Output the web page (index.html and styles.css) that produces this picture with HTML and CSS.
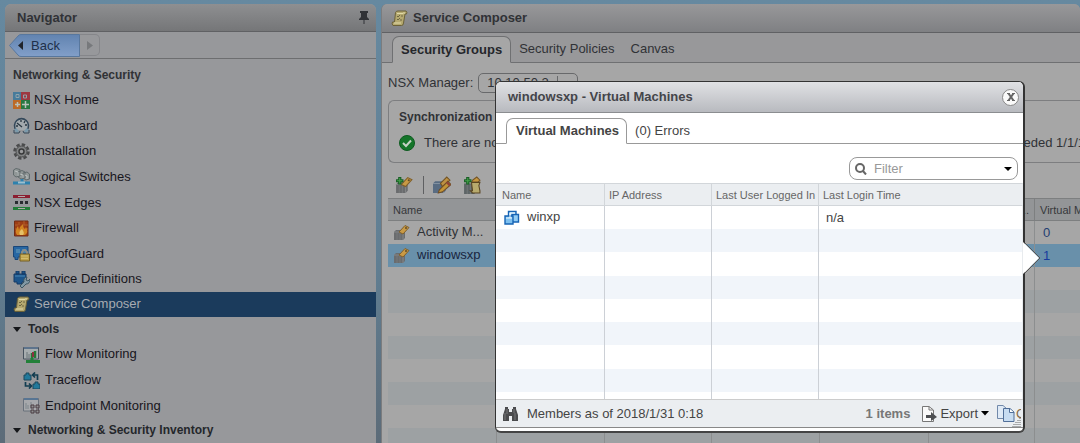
FILE: index.html
```html
<!DOCTYPE html>
<html lang="en">
<head>
<meta charset="utf-8">
<title>Service Composer</title>
<link rel="stylesheet" href="styles.css">
</head>
<body>
<svg class="defs" aria-hidden="true">
  <symbol id="scroll" viewBox="0 0 17 17">
    <path d="M4.500 2.500Q5 1 7 1H15Q16.500 2 15.500 4H14L12.500 13Q12.500 15.500 10.500 15.500H2Q.5 14 1.500 12H3.500Z" fill="#b5a970" stroke="#6b6138"/>
    <path d="M6 3.500H12M3 13H10M13 2V4" stroke="#e0d9a8" fill="none"/>
    <path d="M6 6l1 1 2-2M10 6h2M6 9l1 1 2-2M9 10h2" stroke="#6f6742" fill="none"/>
  </symbol>
  <symbol id="group" viewBox="0 0 17 17">
    <path d="M1 8L3 6H12V14L10 16H1Z" fill="#6a6c6e"/>
    <path d="M1 8H10V16M10 8L12 6" stroke="#858789" fill="none"/>
    <path d="M4 9V16M7 9V16" stroke="#77797b" fill="none"/>
    <path d="M6 8L12 1.500L16 3.500L10 10Z" fill="#c99a45" stroke="#80602c"/>
    <circle cx="13" cy="4" r="1" fill="#614b26"/>
  </symbol>
  <symbol id="plus" viewBox="0 0 17 17"><path d="M4.500 1V8M1 4.500H8" stroke="#175f24" stroke-width="3"/><path d="M4.500 2V7M2 4.500H7" stroke="#46a24b"/></symbol>
</svg>
<div class="app">
  <nav class="panel navigator" aria-label="Navigator">
    <header class="panel-head">
      <h2>Navigator</h2>
      <svg class="pin" width="12" height="15" viewBox="0 0 12 15"><path d="M2 1H10V3H9V7L11 9V10H1V9L3 7V3H2ZM5.500 10H6.500V14H5.500Z" fill="#303236"/></svg>
    </header>
    <div class="history">
      <button class="back"><svg width="71" height="23" viewBox="0 0 71 23"><defs><linearGradient id="bg" x2="0" y2="1"><stop stop-color="#6183b0"/><stop offset="1" stop-color="#829fc9"/></linearGradient></defs><path d="M.5 11.500L9 2Q10 .5 12 .5H70.500V22.500H12Q10 22.500 9 21Z" fill="url(#bg)" stroke="#58779d"/><path d="M14 7V16L9 11.500Z" fill="#20242c"/></svg><span>Back</span></button>
      <button class="forward" aria-label="Forward"><svg width="6" height="9" viewBox="0 0 6 9"><path d="M0 0L6 4.500L0 9Z" fill="#77797c"/></svg></button>
    </div>
    <h3>Networking &amp; Security</h3>
    <ul class="nav-list">
      <li><a href="#"><svg viewBox="0 0 17 17"><rect width="8" height="8" fill="#477b9b"/><rect x="8" width="9" height="8" fill="#9e3741"/><rect y="8" width="8" height="9" fill="#bd6a27"/><rect x="8" y="8" width="9" height="9" fill="#277841"/><path d="M3 2.500H6V5.500H3ZM10.500 3h3v3h-3Z" fill="none" stroke="#8fa3ab"/><path d="M2 12.500H7M4.500 10v5M9 12.500h7M12.500 9v7" fill="none" stroke="#b9c1bb" stroke-width="1.500"/></svg>NSX Home</a></li>
      <li><a href="#"><svg viewBox="0 0 17 17"><path d="M3 13A7 7 0 1 1 14 13" fill="#a3a9ad" stroke="#34485a" stroke-width="1.600"/><path d="M4 6L9 10M8 3V5M12 4l-1 2M14 8h-2M3 9h2" stroke="#2a3742" fill="none" stroke-width="1.300"/><path d="M2 12L5 15M15 12L12 15" stroke="#7a9aac" stroke-width="3"/><path d="M1 13v3h5l1-2M16 13v3h-5l-1-2" stroke="#34485a" fill="none"/></svg>Dashboard</a></li>
      <li><a href="#"><svg viewBox="0 0 17 17"><circle cx="8.500" cy="8.500" r="7" fill="none" stroke="#4a4b4c" stroke-width="2.500" stroke-dasharray="3.400 2.100"/><circle cx="8.500" cy="8.500" r="5.500" fill="#808283" stroke="#4a4b4c"/><circle cx="8.500" cy="8.500" r="2.500" fill="#9b9c9e" stroke="#393a3b" stroke-width="1.500"/></svg>Installation</a></li>
      <li><a href="#"><svg viewBox="0 0 17 17"><path d="M.5 2L3 .5L7 1.500V8L3 9L.5 7ZM5 4L9 2.500L12 4V10L8 11L5 9ZM10 5L14 4L16.500 6V11L13 12L10 10Z" fill="#919797" stroke="#626b6d"/><path d="M2 3l3 1v4M7 6l3 1v3M12 7l2 1v3" fill="none" stroke="#bac0c0"/><path d="M9 11V15M0 15H17" stroke="#2d81ae" stroke-width="3"/><path d="M5 14.500h7" stroke="#9bc0cf" stroke-width="2"/></svg>Logical Switches</a></li>
      <li><a href="#"><svg viewBox="0 0 17 17"><path d="M0 2.500H17" stroke="#8b1e31" stroke-width="3"/><path d="M0 14.500H17" stroke="#227c38" stroke-width="3"/><path d="M5 2.500h7M5 14.500h7" stroke="#b2a9a9"/><path d="M2 8.500h3M7 8.500h3M12 8.500h3" stroke="#292c30" stroke-width="3"/></svg>NSX Edges</a></li>
      <li><a href="#"><svg viewBox="0 0 17 17"><path d="M1.500 1H15V16H1.500Z" fill="#9e3d15" stroke="#702d16"/><path d="M2 5H5M6 2V5M10 5H15M11 1V5M2 9H4M13 9H15" stroke="#b0602c"/><path d="M4 15Q1 11 5 6L6 10Q7 6 10 4Q10 8 12 9L13 7Q16 12 12 15Z" fill="#d18422"/><path d="M7 15Q5 12 9 9Q12 13 10 15Z" fill="#e6c169"/></svg>Firewall</a></li>
      <li><a href="#"><svg viewBox="0 0 17 17"><path d="M.5 1.500H15V12H5V14.500H2V12H.5Z" fill="#2867a3" stroke="#1a4779"/><path d="M3 4h4v4H3ZM9 4h4v4H9Z" fill="#4b84ae"/><path d="M9 9V7Q11.500 3 14 7V9" fill="none" stroke="#8b8e89" stroke-width="2"/><path d="M7 9H16.500V16H7Z" fill="#bfa34d" stroke="#745f25"/><path d="M8 11h7M8 13.500h7" stroke="#d3bc6d"/></svg>SpoofGuard</a></li>
      <li><a href="#"><svg viewBox="0 0 17 17"><path d="M3 0H6V3H3ZM9 0H12V3H9ZM1 3H13V11H9V13H4V11H1Z" fill="#1d558b" stroke="#163b65"/><path d="M2 5H12" stroke="#4989b7"/><path d="M7 15L11 11Q10 7 14 6L13 9L15 10L17 8Q17 13 13 13L9 17Z" fill="#8198a5" stroke="#3d5663"/></svg>Service Definitions</a></li>
      <li><a href="#" class="current" aria-current="page"><svg><use href="#scroll"/></svg>Service Composer</a></li>
    </ul>
    <h3 class="branch"><svg width="8" height="5" viewBox="0 0 8 5"><path d="M0 0H8L4 5Z" fill="#15171a"/></svg>Tools</h3>
    <ul class="nav-list tools">
      <li><a href="#"><svg viewBox="0 0 17 17"><path d="M.5 1.500H15.500V13H.5Z" fill="#a7adaf" stroke="#46515c"/><path d="M1 2H15" stroke="#5d738c" stroke-width="2"/><path d="M4 6V12M6 8V12" stroke="#6b7478"/><path d="M9 12V7M12 12V5" stroke="#267937" stroke-width="2.500"/><path d="M10 6V11" stroke="#8d3141" stroke-width="2"/><path d="M9 12V15M3 15.500H17" stroke="#228039" stroke-width="3"/></svg>Flow Monitoring</a></li>
      <li><a href="#"><svg viewBox="0 0 17 17"><path d="M1 3H3V1H6V3H8V8H1ZM10 12H12V10H15V12H17V17H10Z" fill="#22799b" stroke="#1d485d"/><path d="M14.500 8V3H10M12 .5L9.500 3L12 5.500M2.500 10V14H8M6 11.500L8.500 14L6 16.500" fill="none" stroke="#123c50" stroke-width="1.700"/></svg>Traceflow</a></li>
      <li><a href="#"><svg viewBox="0 0 17 17"><path d="M.5 1.500H15.500V14H.5Z" fill="#a7a9ac" stroke="#69717b"/><path d="M1 2H15" stroke="#587593" stroke-width="2"/><path d="M3 6V12M5 8V12M8 5V12" stroke="#7c858a"/><path d="M8 8h3v3H8ZM13 8h3v3h-3ZM8 13h3v3H8ZM13 13h3v3h-3Z" fill="#8f9091" stroke="#4b3d42"/></svg>Endpoint Monitoring</a></li>
    </ul>
    <h3 class="branch"><svg width="8" height="5" viewBox="0 0 8 5"><path d="M0 0H8L4 5Z" fill="#15171a"/></svg>Networking &amp; Security Inventory</h3>
  </nav>

  <main class="panel composer">
    <header class="panel-head">
      <svg class="icon"><use href="#scroll"/></svg>
      <h1>Service Composer</h1>
    </header>
    <div class="tabs">
      <button class="tab active">Security Groups</button>
      <button class="tab">Security Policies</button>
      <button class="tab">Canvas</button>
    </div>
    <div class="content">
      <div class="manager">
        <label for="manager">NSX Manager:</label>
        <span class="picker"><select id="manager"><option>10.10.50.2</option></select></span>
      </div>
      <section class="sync">
        <h4>Synchronization Status</h4>
        <p><svg class="ok" viewBox="0 0 16 16"><circle cx="8" cy="8" r="7.500" fill="#15752a" stroke="#0e5b20"/><path d="M4 8L7 11L12 5.500" fill="none" stroke="#c5d1c5" stroke-width="2"/></svg>There are no errors.<span>Last synchronization succeeded 1/1/1</span></p>
      </section>
      <div class="toolbar">
        <button aria-label="New group"><svg><use href="#group"/><use href="#plus"/></svg></button>
        <button class="edit" aria-label="Edit group"><svg viewBox="0 0 17 17"><path d="M0 7L2 5H12V14L10 16H0Z" fill="#596c82"/><path d="M0 7H10V16" stroke="#8391a0" fill="none"/><path d="M7 7L13 1L16 4L9 10Z" fill="#be9243" stroke="#745424"/><path d="M6 13L14 5L17 8L9 15L5 16Z" fill="#c29437" stroke="#6f4d25"/><path d="M13 6L16 9" stroke="#914238" stroke-width="2"/></svg></button>
        <button class="add" aria-label="Add policy"><svg viewBox="0 0 17 17"><path d="M1 7H11V17H1Z" fill="#5e6567"/><path d="M4 8V17M7 8V17" stroke="#737878"/><path d="M9 4L13 1L16 4L14 6H8Z" fill="#c69640" stroke="#765626"/><path d="M8 6H16L15 9L16 14V16H9L7 14H9Z" fill="#b8aa6d" stroke="#594522"/><path d="M4.500 1V8M1 4.500H8" stroke="#175f24" stroke-width="3"/><path d="M4.500 2V7M2 4.500H7" stroke="#46a24b"/></svg></button>
      </div>
      <table class="groups">
        <colgroup><col class="c1"><col class="c2"><col class="c3"><col class="c2"><col class="c1"><col class="c4"><col></colgroup>
        <thead><tr><th>Name</th><th></th><th></th><th></th><th></th><th class="more">...</th><th>Virtual Machines</th></tr></thead>
        <tbody>
          <tr><td><svg><use href="#group"/></svg>Activity M...</td><td></td><td></td><td></td><td></td><td></td><td><a href="#">0</a></td></tr>
          <tr class="selected"><td><svg><use href="#group"/></svg>windowsxp</td><td></td><td></td><td></td><td></td><td></td><td><a href="#">1</a></td></tr>
          <tr><td></td><td></td><td></td><td></td><td></td><td></td><td></td></tr>
          <tr><td></td><td></td><td></td><td></td><td></td><td></td><td></td></tr>
          <tr><td></td><td></td><td></td><td></td><td></td><td></td><td></td></tr>
          <tr><td></td><td></td><td></td><td></td><td></td><td></td><td></td></tr>
          <tr><td></td><td></td><td></td><td></td><td></td><td></td><td></td></tr>
          <tr><td></td><td></td><td></td><td></td><td></td><td></td><td></td></tr>
          <tr><td></td><td></td><td></td><td></td><td></td><td></td><td></td></tr>
          <tr><td></td><td></td><td></td><td></td><td></td><td></td><td></td></tr>
        </tbody>
      </table>
    </div>
  </main>
</div>

<div class="dialog" role="dialog" aria-labelledby="dialog-title">
  <header class="dialog-head">
    <h2 id="dialog-title">windowsxp - Virtual Machines</h2>
    <button class="close" aria-label="Close"><svg width="8" height="8" viewBox="0 0 8 8"><path d="M1.500 .5L6.500 7.500M6.500 .5L1.500 7.500" stroke="#666" stroke-width="2"/><path d="M0 .5h3M5 .5h3M0 7.500h3M5 7.500h3" stroke="#666"/></svg></button>
  </header>
  <div class="tabs">
    <button class="tab active">Virtual Machines</button>
    <button class="tab">(0) Errors</button>
  </div>
  <div class="filter-row">
    <div class="filter">
      <svg width="12" height="12" viewBox="0 0 12 12"><circle cx="5" cy="5" r="4" fill="none" stroke="#666" stroke-width="2"/><path d="M8 8L11 11.500" stroke="#666" stroke-width="2"/></svg>
      <input type="text" placeholder="Filter" aria-label="Filter">
      <button aria-label="Filter options"><svg width="8" height="4" viewBox="0 0 8 4"><path d="M0 0H8L4 4Z"/></svg></button>
    </div>
  </div>
  <table class="machines">
    <colgroup><col class="c1"><col class="c3"><col class="c3"><col></colgroup>
    <thead><tr><th>Name</th><th>IP Address</th><th>Last User Logged In</th><th>Last Login Time</th></tr></thead>
    <tbody>
      <tr><td><svg viewBox="0 0 17 17"><path d="M5.500 2.500H13V9H5.500Z" fill="#c2e4fa" stroke="#1764b5" stroke-width="1.400"/><path d="M9 5.500H15.500V13H9Z" fill="#93cdf4" stroke="#1764b5" stroke-width="1.400"/><path d="M2 7H10V15H2Z" fill="#7ec0ef" stroke="#1764b5" stroke-width="1.400"/><path d="M3 9H9M7 9V4H12" stroke="#f1faff" fill="none"/></svg>winxp</td><td></td><td></td><td>n/a</td></tr>
      <tr><td></td><td></td><td></td><td></td></tr>
      <tr><td></td><td></td><td></td><td></td></tr>
      <tr><td></td><td></td><td></td><td></td></tr>
      <tr><td></td><td></td><td></td><td></td></tr>
      <tr><td></td><td></td><td></td><td></td></tr>
      <tr><td></td><td></td><td></td><td></td></tr>
      <tr><td></td><td></td><td></td><td></td></tr>
      <tr class="rest"><td></td><td></td><td></td><td></td></tr>
    </tbody>
  </table>
  <footer class="dialog-foot">
    <svg width="17" height="16" viewBox="0 0 17 16"><path d="M3 1H6V3H7V6H10V3H11V1H14V3L16 9V15H10V10H7V15H1V9L3 3Z" fill="#4a4b4d"/><path d="M3 7V14M13 7V14M5 3V8M12 3V7" stroke="#77797b"/></svg>
    <span class="stamp">Members as of 2018/1/31 0:18</span>
    <strong>1 items</strong>
    <button class="export"><svg width="16" height="16" viewBox="0 0 16 16"><path d="M1.500 .5H8L12.500 4V15.500H1.500Z" fill="#fafafa" stroke="#777"/><path d="M8 .5V4H12" fill="none" stroke="#777"/><path d="M5 9H10V6L16 11L10 15V12H5Z" fill="#4d4f52"/></svg>Export<svg width="8" height="5" viewBox="0 0 8 5"><path d="M0 0H8L4 4.500Z"/></svg></button>
    <button class="copy"><svg width="18" height="17" viewBox="0 0 18 17"><path d="M.5 .5H6L9.500 3.500V13.500H.5Z" fill="#dfeaf6" stroke="#7189aa"/><path d="M6.500 3.500H13L17 7V16.500H6.500Z" fill="#c7dcf1" stroke="#516f99"/><path d="M12.500 4V7.500H17" fill="#fff" stroke="#516f99"/></svg>Copy</button>
  </footer>
  <svg class="grip" width="9" height="9" viewBox="0 0 9 9"><path d="M8 0v1M6 2v1M8 2v1M4 4v1M6 4v1M8 4v1M2 6v1M4 6v1M6 6v1M8 6v1M0 8v1M2 8v1M4 8v1M6 8v1M8 8v1" stroke="#666"/></svg>
  <svg class="pointer" width="18" height="32" viewBox="0 0 18 32"><path d="M0 0L16 16L0 32Z" fill="#fff"/><path d="M2 1L17 16L2 31" fill="none" stroke="#555"/></svg>
</div>
</body>
</html>
```
FILE: styles.css
```css
* { box-sizing: border-box; }

body {
  position: relative;
  height: 100vh;
  margin: 0;
  overflow: hidden;
  background: linear-gradient(#6689a0, #617e92 60%, #5c6b78);
  color: #303236;
  font: 13px/16px "Liberation Sans", Arial, sans-serif;
}

h1, h2, h3, h4, p, ul { margin: 0; padding: 0; font-size: 13px; }
ul { list-style: none; }
svg { flex: none; }
a { color: inherit; text-decoration: none; }
button, input, select { padding: 0; border: 0; background: none; color: inherit; font: inherit; }
.defs { position: absolute; width: 0; height: 0; }

.app { display: flex; gap: 5px; height: 100%; padding: 4px 0 0 5px; }
.panel { display: flex; flex-direction: column; overflow: hidden; border-radius: 6px 6px 0 0; }
.navigator { flex: none; width: 371px; background: #97989b; }
.composer { flex: 1; min-width: 0; border-left: 1px solid #7b7c7e; background: #97989a; }

.panel-head {
  display: flex;
  flex: none;
  align-items: center;
  height: 28px;
  padding: 0 6px 0 12px;
  border-bottom: 1px solid #606164;
  background: linear-gradient(#8e8f91, #757678);
}
.panel-head h2 { flex: 1; }
.composer .panel-head { gap: 5px; height: 29px; padding-left: 9px; background: linear-gradient(#98989a, #7f8083); }
.icon { width: 17px; height: 17px; }

.history {
  display: flex;
  flex: none;
  align-items: center;
  height: 27px;
  padding-left: 4px;
  border-bottom: 1px solid #6d6e70;
}
.back { display: grid; align-items: center; height: 23px; color: #20304a; }
.back > * { grid-area: 1 / 1; }
.back span { padding: 2px 0 0 22px; text-align: left; }
.forward {
  display: flex;
  align-items: center;
  width: 20px;
  height: 22px;
  padding-left: 7px;
  border: 1px solid #85868a;
  border-left: 0;
  border-radius: 0 5px 5px 0;
}

h3 { flex: none; height: 28px; padding-left: 8px; font-size: 12px; line-height: 32px; }
h3.branch { display: flex; align-items: center; gap: 7px; height: 24px; line-height: 24px; color: #24272b; }
.nav-list { display: flex; flex: none; flex-direction: column; height: 230px; }
.nav-list.tools { height: 77px; }
.nav-list li { flex: 1; }
.nav-list a { display: flex; align-items: center; gap: 4px; height: 100%; padding: 1px 0 0 8px; color: #17161d; }
.nav-list svg { width: 17px; height: 17px; }
.tools a { padding-left: 18px; gap: 5px; }
.nav-list .current { padding-top: 0; background: #1b3b5c; color: #a7abb1; }

.tabs { display: flex; flex: none; }
.tabs::after { flex: 1; border-bottom: 1px solid #6f7072; content: ""; }
.tab { border-bottom: 1px solid #6f7072; }
.tab.active { border: 1px solid #6f7072; border-bottom-color: transparent; border-radius: 7px 7px 0 0; font-weight: bold; }
.tabs::before { width: 10px; border-bottom: 1px solid #6f7072; content: ""; }
.composer .tabs { height: 30px; padding-top: 3px; background: #98989a; }
.composer .tab { padding: 0 8px; color: #303236; }
.composer .tab.active { background: #a6a6a6; color: #25272b; }

.content { flex: 1; min-height: 0; padding-left: 6px; background: #a6a6a6; }
.manager { display: flex; align-items: center; gap: 5px; height: 37px; padding-top: 3px; }
.picker { position: relative; display: flex; width: 100px; }
.picker::after { position: absolute; top: 3px; right: 20px; height: 14px; border-left: 1px solid #67696b; content: ""; }
.picker select { width: 100%; height: 20px; padding-left: 8px; border: 1px solid #68696b; border-radius: 5px; appearance: none; }

.sync { height: 63px; padding: 8px 0 0 10px; border: 1px solid #7d7e80; border-right: 0; border-radius: 6px 0 0 6px; }
.sync h4 { font-size: 12px; line-height: 16px; }
.sync p { display: flex; align-items: center; gap: 9px; margin-top: 10px; white-space: nowrap; }
.sync p span { margin-right: -5px; margin-left: auto; }
.ok { width: 16px; height: 16px; }

.toolbar { display: flex; align-items: center; height: 35px; padding: 9px 0 0 7px; }
.toolbar svg { display: block; width: 18px; height: 18px; }
.edit { margin-left: 10px; padding-left: 9px; border-left: 1px solid #5f6062; }
.add { margin-left: 12px; }

table { width: 100%; table-layout: fixed; border-spacing: 0; border-collapse: separate; }
th, td { height: 23px; padding: 0; overflow: hidden; text-align: left; white-space: nowrap; }
th { font-size: 11px; font-weight: normal; line-height: 14px; }
td svg { width: 17px; height: 17px; margin-right: 7px; vertical-align: middle; }
.c1 { width: 109px; }
.c2 { width: 108px; }
.c3 { width: 107px; }
.c4 { width: 106px; }
.groups th { border: solid #7d7f80; border-width: 1px 1px 1px 0; background: #939597; color: #36383b; }
.groups td { border-right: 1px solid #8c8e8f; }
.groups th, .groups td { padding-left: 5px; }
.groups th:last-child, .groups td:last-child { border-right: 0; }
.groups td:last-child { padding-left: 8px; }
.groups .more { padding-right: 5px; text-align: right; }
.groups tbody tr:nth-child(even) { background: #9da1a3; }
.groups tbody tr.selected { background: #6990aa; color: #182540; }
.groups td a { color: #243e72; }
.groups .selected a { color: #173b9d; }

.dialog {
  position: absolute;
  top: 81px;
  right: 55px;
  left: 495px;
  border: 1px solid #333;
  border-right-width: 2px;
  border-bottom: 2px solid #444;
  border-radius: 6px;
  background: #fff;
  color: #444;
}
.dialog-head {
  display: flex;
  align-items: center;
  justify-content: space-between;
  height: 31px;
  padding: 0 4px 0 12px;
  border-bottom: 1px solid #8b8d90;
  border-radius: 5px 5px 0 0;
  background: linear-gradient(#e0e1e4, #b8babf);
  color: #44454a;
}
.close { display: flex; align-items: center; justify-content: center; width: 17px; height: 17px; border: 1px solid #888; border-radius: 50%; background: #fafafa; }
.dialog .tabs { height: 31px; padding-top: 5px; }
.dialog .tab { padding: 0 8px; border-color: #999; }
.dialog .tab.active { padding: 0 7px 0 9px; border-bottom-color: #fff; }
.dialog .tabs::before, .dialog .tabs::after { border-color: #999; }
.filter-row { display: flex; justify-content: flex-end; padding: 13px 5px 3px; }
.filter { display: flex; align-items: center; width: 169px; height: 23px; padding: 0 5px; border: 1px solid #999; border-radius: 8px; }
.filter input { flex: 1; min-width: 0; padding-left: 7px; outline: 0; }
.filter input::placeholder { color: #999; opacity: 1; }
.filter button { display: flex; }

.machines { height: 216px; }
.machines th { height: 23px; padding-left: 4px; border: solid #d2d6da; border-width: 1px 1px 1px 0; background: #ebeef1; color: #666; }
.machines th:first-child { padding-left: 6px; }
.machines td { padding-left: 7px; border-right: 1px solid #ccd0d6; }
.machines th:last-child, .machines td:last-child { border-right-color: #e8ebee; }
.machines tbody tr:nth-child(even) { background: #f1f5fa; }
.machines .rest td { height: 7px; }
.dialog-foot { display: flex; align-items: center; height: 29px; margin-bottom: 3px; padding: 0 2px 0 6px; border: solid #ccc; border-width: 1px 0; border-bottom-color: #888; background: #ebeef1; }
.stamp { flex: 1; padding-left: 8px; }
.dialog-foot strong { margin-right: 11px; color: #777; }
.export { display: flex; align-items: center; gap: 3px; margin-right: 8px; }
.copy { display: flex; align-items: center; gap: 1px; width: 24px; overflow: hidden; color: #856a48; }
.grip { position: absolute; right: 2px; bottom: 4px; }
.pointer { position: absolute; top: 160px; right: -18px; }
```
